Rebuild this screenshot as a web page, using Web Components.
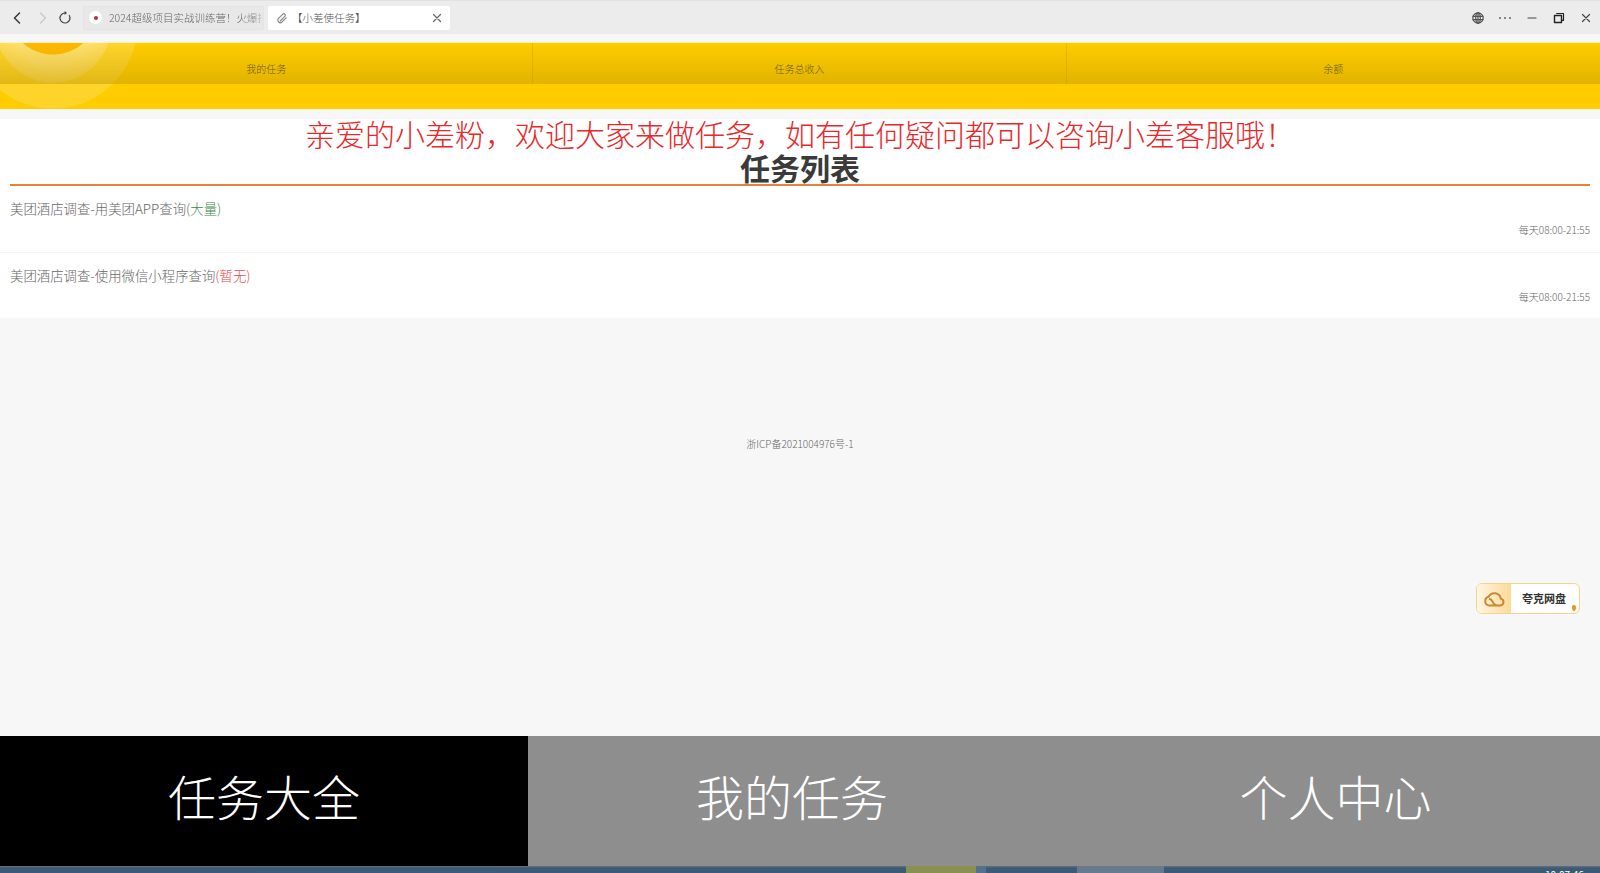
<!DOCTYPE html>
<html lang="zh"><head><meta charset="utf-8"><title>小差使任务</title>
<style>
html,body{margin:0;height:100%;overflow:hidden}
body{font-family:"Noto Sans CJK SC","Liberation Sans",sans-serif;background:#f7f7f7;color:#555;display:flex;flex-direction:column;height:873px}
</style></head><body>
<browser-bar></browser-bar>
<stats-header></stats-header>
<task-panel>
  <task-item status="(大量)" tone="ok">美团酒店调查-用美团APP查询</task-item>
  <task-item status="(暂无)" tone="none">美团酒店调查-使用微信小程序查询</task-item>
</task-panel>
<page-main></page-main>
<tab-footer></tab-footer>
<os-taskbar></os-taskbar>
<script>
function def(name,html,init){customElements.define(name,class extends HTMLElement{
  constructor(){super();this.attachShadow({mode:'open'}).innerHTML=html;}
  connectedCallback(){if(init)init.call(this,this.shadowRoot);}
});}
def('nav-icon',`<style>:host{display:inline-flex;width:16px;height:16px;color:#3c3c3c}svg{width:16px;height:16px;fill:none;stroke:currentColor;stroke-width:1.2;stroke-linecap:round;stroke-linejoin:round}</style><svg viewBox="0 0 16 16"></svg>`,function(r){
  const P={back:'<path d="M10.500 3 5.500 8l5 5" stroke-width="1.6"/>',fwd:'<path d="M5.500 3l5 5-5 5"/>',reload:'<path d="M8 3a5 5 0 1 0 4.300 2.500"/><path d="M7.600 1 10 3 7.600 5Z" fill="currentColor" stroke="none"/>',link:'<path d="M6.200 11 11 6.200a1.500 1.500 0 0 0-2.100-2.100L4.300 8.700a2.500 2.500 0 0 0 3.500 3.500l4.400-4.400"/>',close:'<path d="M4.500 4.500l7 7M11.500 4.500l-7 7"/>',globe:'<circle cx="8" cy="8" r="5.200"/><ellipse cx="8" cy="8" rx="2.300" ry="5.200"/><path d="M3 6.300h10M3 9.700h10M8 2.800v10.400"/>',more:'<path d="M3 8h.01M8 8h.01M13 8h.01" stroke-width="1.800"/>',min:'<path d="M4 8h8"/>',restore:'<rect x="3.500" y="5.500" width="7" height="7" stroke-width="1.400"/><path d="M5.700 3.500h6.800v6.800h-2"/>'};
  r.querySelector('svg').innerHTML=P[this.getAttribute('name')];
  if(this.hasAttribute('color'))this.style.color=this.getAttribute('color');
});
def('browser-bar',`<style>
:host{display:flex;align-items:center;height:34px;margin-bottom:8px;background:#ececec;box-sizing:border-box;padding:0 6px 0 9px;border-top:1px solid #e2e2e2}
.nav{display:grid;grid-template-columns:26px 22px 16px;margin-right:10px}
.tab{height:24px;display:flex;align-items:center;box-sizing:border-box;font-size:10.500px;border-radius:2px;font-weight:300}
.off{width:181px;background:#e8e8e8;padding:0 1px 0 5px;color:#666;overflow:hidden;white-space:nowrap;margin-right:4px;border:1px solid #e4e4e4}
.fav{flex:none;width:13px;height:13px;border-radius:50%;background:#fff;display:grid;place-items:center;margin-right:7px}
.fav i{width:4px;height:4px;border-radius:50%;background:#b03040}
.t{overflow:hidden;flex:1;min-width:0;-webkit-mask-image:linear-gradient(to right,#000 88%,rgba(0,0,0,.35))}
.on{width:182px;background:#fff;color:#555;padding:0 5px 0 6px}
.on span{flex:1;margin-left:2px}
.sp{flex:1}
.r{display:flex;gap:11px;align-items:center;margin-right:0}
.r nav-icon:last-child{margin-left:0}
</style>
<div class="nav"><nav-icon name="back"></nav-icon><nav-icon name="fwd" color="#c8c8c8"></nav-icon><nav-icon name="reload" color="#444"></nav-icon></div>
<div class="tab off"><span class="fav"><i></i></span><span class="t">2024超级项目实战训练营！火爆招</span></div>
<div class="tab on"><nav-icon name="link" color="#888"></nav-icon><span>【小差使任务】</span><nav-icon name="close" color="#666"></nav-icon></div>
<div class="sp"></div>
<div class="r"><nav-icon name="globe" color="#555"></nav-icon><nav-icon name="more" color="#555"></nav-icon><nav-icon name="min" color="#444"></nav-icon><nav-icon name="restore" color="#222"></nav-icon><nav-icon name="close" color="#444"></nav-icon></div>`);
def('stats-header',`<style>
:host{display:block;height:67px;margin-bottom:10px;background:
 radial-gradient(circle at 53px -34px,#ffb800 0 45px,transparent 46px),
 radial-gradient(circle at 53px -19px,#ffe06c 0 40px,#ffdb57 58px,transparent 59px),
 radial-gradient(circle at 53px -19px,#ffd42a 0 84px,transparent 85px),
 #ffcc00;border-top:1px solid #fff3c0;box-sizing:border-box}
.band{display:grid;grid-template-columns:repeat(3,1fr);height:41px;background:linear-gradient(to bottom,rgba(190,150,0,0),rgba(190,150,0,.46))}
.c{display:flex;align-items:flex-end;justify-content:center;padding-bottom:8px;font-size:10px;line-height:14px;font-weight:300;color:#6b5a10;border-right:1px solid rgba(170,130,0,.22)}
.c:last-child{border-right:0}
</style><div class="band"><div class="c">我的任务</div><div class="c">任务总收入</div><div class="c">余额</div></div>`);
def('task-panel',`<style>
:host{display:block;background:#fff}
.notice{text-align:center;font-size:30px;line-height:28px;font-weight:300;color:#e8282a;padding-bottom:3px}
h2{margin:0 10px;text-align:center;font-size:30px;line-height:34px;font-weight:700;color:#3a3a3a;border-bottom:2px solid #e9803a;height:34px}
</style><div class="notice">亲爱的小差粉，欢迎大家来做任务，如有任何疑问都可以咨询小差客服哦！</div><h2>任务列表</h2><slot></slot>`);
def('task-item',`<style>
:host{display:block;height:67px;box-sizing:border-box;padding:12px 10px 0;border-bottom:1px solid #f4f4f4;font-weight:300}
:host(:last-child){border-bottom:0;height:65px;padding-top:12px}
.n{font-size:13.400px;line-height:20px;color:#666}
.ok{color:#3f8a4a}.none{color:#e8474c}
.d{text-align:right;font-size:10px;line-height:14px;color:#666;margin-top:5px}
:host(:last-child) .d{margin-top:5px}
</style><div class="n"><slot></slot><span id="s"></span></div><div class="d">每天08:00-21:55</div>`,function(r){
  const s=r.getElementById('s');s.textContent=this.getAttribute('status');s.className=this.getAttribute('tone');
});
def('quark-badge',`<style>
:host{position:absolute;left:1476px;top:583px;width:104px;height:31px;display:flex;box-sizing:border-box;border:1px solid #f3d58e;border-radius:6px;background:#fff;overflow:hidden;font-size:11px;font-weight:700;color:#333}
.l{width:34px;background:linear-gradient(to right,#fff6e2,#fdd999);display:grid;place-items:center}
svg{width:22px;height:18px;fill:none;stroke:#c98a35;stroke-width:2}
.t{flex:1;padding-left:11px;line-height:29px;white-space:nowrap}
i{position:absolute;right:3px;bottom:2px;width:4px;height:6px;border-radius:50% 50% 50% 50%/35% 35% 65% 65%;background:#e8961e}
</style><div class="l"><svg viewBox="0 0 22 18"><path d="M6 15.500h11a3.500 3.500 0 0 0 .8-6.900A6.500 6.500 0 0 0 5.600 6.700 4.500 4.500 0 0 0 6 15.500Z"/><path d="M6 9a3.300 3.300 0 0 1 3 1.800l1.500 2.400A3.300 3.300 0 0 0 13.500 15"/></svg></div><div class="t">夸克网盘</div><i></i>`);
def('page-main',`<style>
:host{flex:1;display:block;position:relative;text-align:center;font-size:10px;font-weight:300;color:#666}
p{margin:0;padding-top:118px;line-height:16px}
</style><p>浙ICP备2021004976号-1</p>`);
def('tab-footer',`<style>
:host{display:grid;grid-template-columns:528px 528px 1fr;height:130px;background:#8e8e8e;color:#fff;font-size:48px;font-weight:300;text-align:center;line-height:118px}
.on{background:#000}
.x{padding-left:15px}
</style><div class="on">任务大全</div><div>我的任务</div><div class="x">个人中心</div>`);
def('os-taskbar',`<style>
:host{display:flex;height:7px;background:linear-gradient(#5b7286,#3d5a73 30%);overflow:hidden;position:relative;font-size:10px;color:#fff}
.a{width:906px}.o{width:70px;background:#8a9150}.s{width:10px;background:#55708a}.b{width:91px}.g{width:87px;background:#67798b}
.t{margin-left:auto;width:55px;line-height:12px;margin-top:3px;white-space:nowrap}
</style><div class="a"></div><div class="o"></div><div class="s"></div><div class="b"></div><div class="g"></div><div class="t">10:07:46</div>`);
document.body.appendChild(document.createElement('quark-badge'));
</script>
</body></html>
